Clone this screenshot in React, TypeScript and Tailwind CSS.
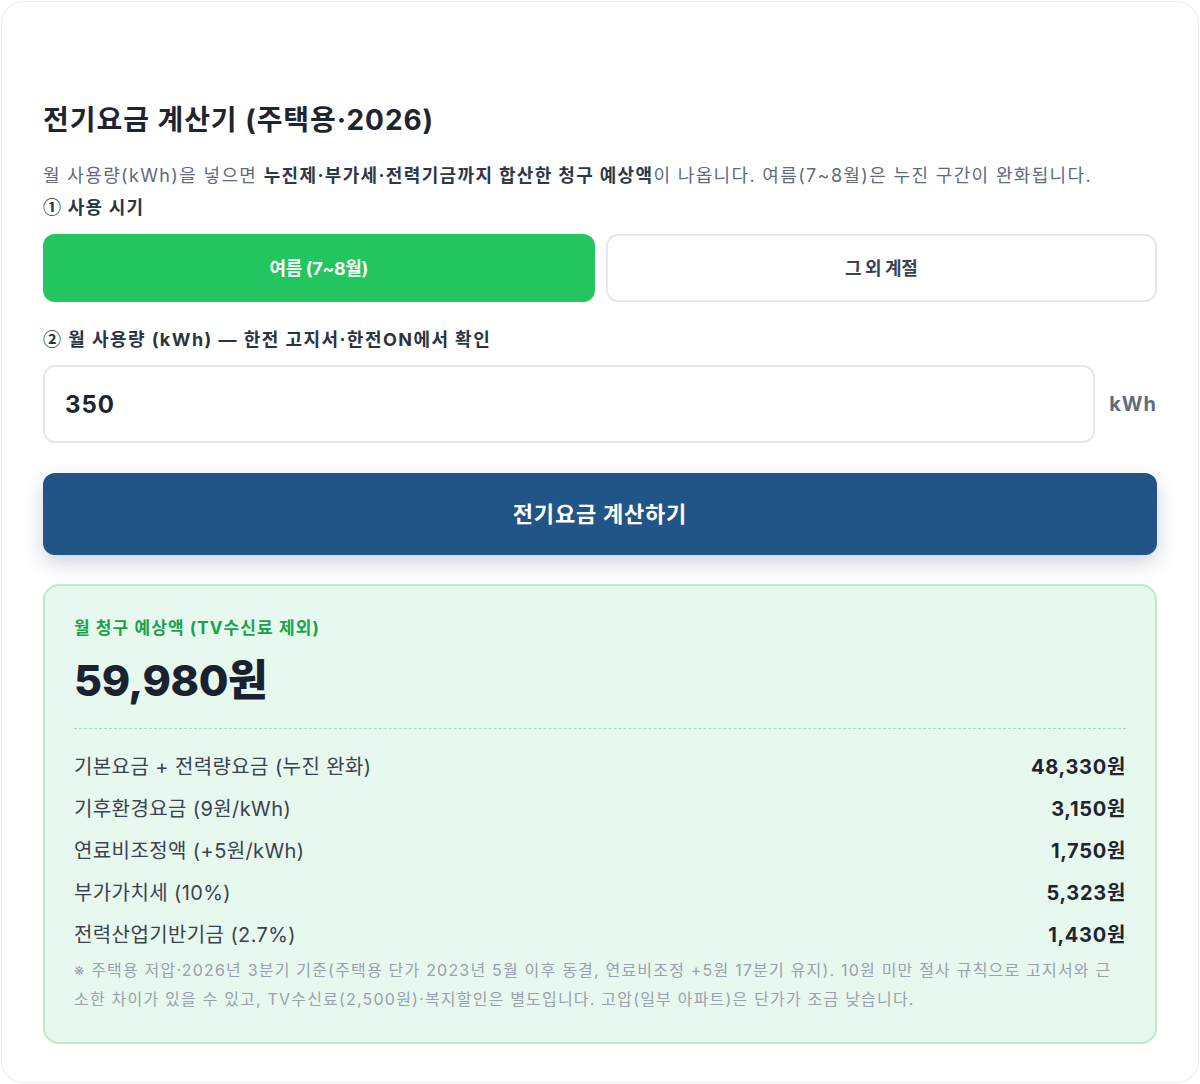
import React, { useState } from "react";

const FONT = { fontFamily: 'Inter, "Noto Sans CJK KR", "Noto Sans", sans-serif' };
const CJK = { fontFamily: '"Noto Sans CJK KR", sans-serif' };

const rows: [string, string][] = [
  ["기본요금 + 전력량요금 (누진 완화)", "48,330원"],
  ["기후환경요금 (9원/kWh)", "3,150원"],
  ["연료비조정액 (+5원/kWh)", "1,750원"],
  ["부가가치세 (10%)", "5,323원"],
  ["전력산업기반기금 (2.7%)", "1,430원"],
];

function SeasonButton({ active, label, onClick }: { active: boolean; label: string; onClick: () => void }) {
  return (
    <button
      onClick={onClick}
      className={
        active
          ? "h-[68px] rounded-[12px] bg-[#22c55e] text-[18px] font-bold tracking-[-0.4px] text-white"
          : "h-[68px] rounded-[12px] border-2 border-[#e5e8ec] bg-white text-[18px] font-bold tracking-[-0.4px] text-[#3a4350]"
      }
    >
      {label}
    </button>
  );
}

export default function App() {
  const [summer, setSummer] = useState(true);
  const [kwh, setKwh] = useState("350");

  return (
    <div className="min-h-[1084px] bg-white p-[1px]" style={FONT}>
      <div className="rounded-[22px] border border-[#eceef2] bg-white px-[41px] pt-[98px] pb-[38px]">
        <h1 className="text-[28px] font-bold leading-[40px] tracking-[0.95px] text-[#1e2530]">
          전기요금 계산기 (주택용·2026)
        </h1>
        <p className="mt-[22px] text-[18px] leading-[28px] tracking-[1.35px] text-[#5f6b7a]">
          월 사용량(kWh)을 넣으면{" "}
          <b className="font-bold text-[#2e3846]">누진제·부가세·전력기금까지 합산한 청구 예상액</b>이 나옵니다.
          여름(7~8월)은 누진 구간이 완화됩니다.
        </p>
        <div className="mt-[2px] text-[18px] font-bold leading-[28px] tracking-[1.2px] text-[#2b3440]">
          <span style={CJK}>①</span> 사용 시기
        </div>

        <div className="mt-[12px] grid grid-cols-2 gap-[11px]">
          <SeasonButton active={summer} label="여름 (7~8월)" onClick={() => setSummer(true)} />
          <SeasonButton active={!summer} label="그 외 계절" onClick={() => setSummer(false)} />
        </div>

        <div className="mt-[22px] text-[18px] font-bold leading-[28px] tracking-[1.45px] text-[#2b3440]">
          <span style={CJK}>②</span> 월 사용량 (kWh) — 한전 고지서·한전ON에서 확인
        </div>
        <div className="mt-[11px] flex items-center gap-[14px]">
          <input
            value={kwh}
            onChange={(e) => setKwh(e.target.value)}
            className="h-[78px] flex-1 rounded-[12px] border-2 border-[#e5e8ec] bg-white px-[20px] text-[24px] font-bold tracking-[1px] text-[#1e2530] outline-none"
            style={FONT}
          />
          <span className="text-[20px] font-bold tracking-[1px] text-[#5f6b7f]">kWh</span>
        </div>

        <button className="mt-[30px] h-[82px] w-full rounded-[12px] bg-[#225587] text-[22px] font-bold tracking-[0.8px] text-white shadow-[0_8px_20px_rgba(30,60,100,0.22)]">
          전기요금 계산하기
        </button>

        <div className="mt-[29px] rounded-[16px] border-2 border-[#bde8cb] bg-[#e7f8ee] px-[29px] pt-[30px] pb-[28px]">
          <div className="text-[17px] font-bold leading-[24px] tracking-[1.1px] text-[#16a34a]">
            월 청구 예상액 (TV수신료 제외)
          </div>
          <div className="mt-[14px] text-[43px] font-extrabold leading-[52px] tracking-[-0.4px] text-[#1a2230]">
            59,980원
          </div>
          <div className="mt-[22px] border-t border-dashed border-[#a9dcb9]" />
          <div className="mt-[17px] flex flex-col">
            {rows.map(([label, value]) => (
              <div key={label} className="flex h-[42px] items-center justify-between">
                <span className="text-[20px] tracking-[0.4px] text-[#3a4350]">{label}</span>
                <span className="text-[20px] font-bold tracking-[0.7px] text-[#1e2530]">{value}</span>
              </div>
            ))}
          </div>
          <p className="mt-0 text-[16px] leading-[29px] tracking-[1.2px] text-[#98a1ad]">
            ※ 주택용 저압·2026년 3분기 기준(주택용 단가 2023년 5월 이후 동결, 연료비조정 +5원 17분기 유지). 10원 미만
            절사 규칙으로 고지서와 근소한 차이가 있을 수 있고, TV수신료(2,500원)·복지할인은 별도입니다. 고압(일부
            아파트)은 단가가 조금 낮습니다.
          </p>
        </div>
      </div>
    </div>
  );
}
